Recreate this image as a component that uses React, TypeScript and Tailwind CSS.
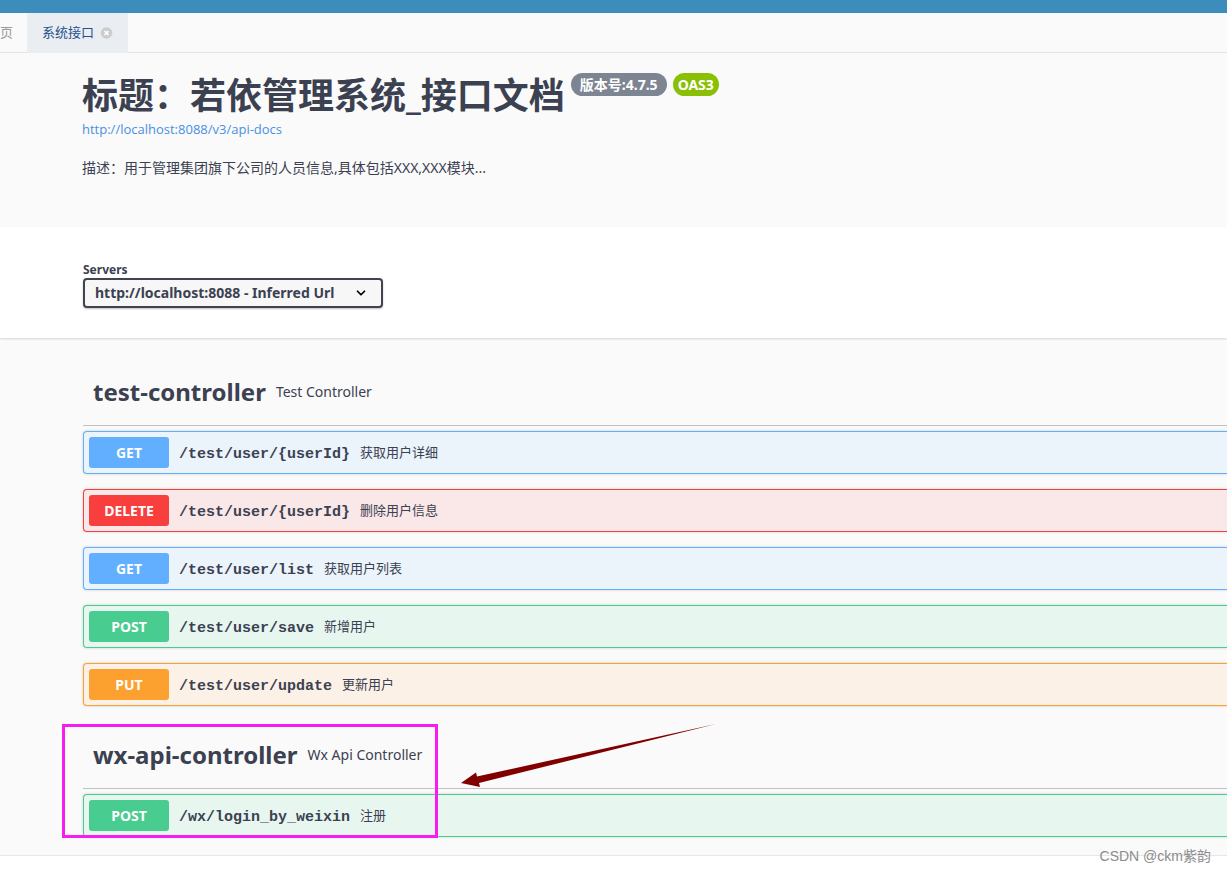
import { useState } from "react";
import clsx from "clsx";
import { ChevronDown } from "lucide-react";

type Method = "GET" | "DELETE" | "POST" | "PUT";

type Operation = {
  method: Method;
  path: string;
  summary: string;
};

const rowStyles: Record<Method, string> = {
  GET: "border-[#61affe] bg-[#ebf3fb]",
  DELETE: "border-[#f93e3e] bg-[#fae7e7]",
  POST: "border-[#49cc90] bg-[#e8f6f0]",
  PUT: "border-[#fca130] bg-[#fbf1e6]",
};

const methodStyles: Record<Method, string> = {
  GET: "bg-[#61affe]",
  DELETE: "bg-[#f93e3e]",
  POST: "bg-[#49cc90]",
  PUT: "bg-[#fca130]",
};

const testOperations: Operation[] = [
  { method: "GET", path: "/test/user/{userId}", summary: "获取用户详细" },
  { method: "DELETE", path: "/test/user/{userId}", summary: "删除用户信息" },
  { method: "GET", path: "/test/user/list", summary: "获取用户列表" },
  { method: "POST", path: "/test/user/save", summary: "新增用户" },
  { method: "PUT", path: "/test/user/update", summary: "更新用户" },
];

const wxOperations: Operation[] = [
  { method: "POST", path: "/wx/login_by_weixin", summary: "注册" },
];

function OperationRow({ method, path, summary }: Operation) {
  return (
    <button
      type="button"
      className={clsx(
        "flex h-[43px] w-full items-center rounded-l border border-r-0 px-[5px] text-left shadow-[0_0_3px_rgba(0,0,0,0.19)]",
        rowStyles[method]
      )}
    >
      <span
        className={clsx(
          "h-[31px] min-w-20 rounded-[3px] px-[15px] text-center text-sm leading-[31px] font-bold text-white",
          methodStyles[method]
        )}
      >
        {method}
      </span>
      <span className="px-[10px] pt-1 font-['Liberation_Mono',monospace] text-[15px] leading-5 font-bold">{path}</span>
      <span className="pb-[2px] text-[13px] leading-5">{summary}</span>
    </button>
  );
}

function TagSection({ name, description, operations }: { name: string; description: string; operations: Operation[] }) {
  return (
    <section>
      <h3 className="mb-[5px] flex h-[68px] items-center gap-[10px] border-b border-[#3b4151]/30 pl-[10px]">
        <span className="text-2xl leading-8 font-bold">{name}</span>
        <small className="text-sm leading-5 font-normal">{description}</small>
      </h3>
      <div className="flex flex-col gap-[15px]">
        {operations.map((op) => (
          <OperationRow key={op.method + op.path} {...op} />
        ))}
      </div>
    </section>
  );
}

export default function App() {
  const [server, setServer] = useState("http://localhost:8088");

  return (
    <div className="relative min-h-screen overflow-x-hidden bg-white font-['Noto_Sans','Noto_Sans_CJK_SC',sans-serif] text-[#3b4151]">
      <div className="h-[13px] bg-[#3c8dbc]" />

      <nav className="flex h-10 border-b border-[#e4e4e4] bg-[#fafafa] text-[13px]">
        <a href="#home" aria-label="首页" className="flex w-[27px] items-center text-[#999]">
          页
        </a>
        <div className="flex h-10 items-center gap-[6px] bg-[#eaedf1] px-[15px] text-[#23508e]">
          <a href="#api">系统接口</a>
          <button type="button" aria-label="关闭">
            <svg viewBox="0 0 12 12" className="h-3 w-[13px]">
              <circle cx="6" cy="6" r="5.8" fill="#ccc" />
              <path d="M4 4l4 4M8 4l-4 4" stroke="#fff" strokeWidth="1.7" />
            </svg>
          </button>
        </div>
      </nav>

      <header className="bg-[#fafafa] pt-[18px] pb-[49px] pl-[82px]">
        <div className="flex items-start gap-[6px]">
          <h2 className="text-4xl leading-[50px] font-bold">标题：若依管理系统_接口文档</h2>
          <span className="mt-[2px] h-[23px] rounded-full bg-[#7d8492] px-[9px] text-sm leading-[23px] font-bold text-white">
            版本号:4.7.5
          </span>
          <span className="mt-[2px] h-[23px] rounded-full bg-[#89bf04] px-[5px] text-sm leading-[23px] font-bold text-white">
            OAS3
          </span>
        </div>
        <a href="#api-docs" className="block font-['Open_Sans',sans-serif] text-[13px] leading-4 text-[#4990e2]">
          http://localhost:8088/v3/api-docs
        </a>
        <p className="mt-[21px] text-sm leading-5">描述：用于管理集团旗下公司的人员信息,具体包括XXX,XXX模块...</p>
      </header>

      <div className="relative bg-white pt-[34px] pb-[30px] pl-[83px] shadow-[0_1px_2px_rgba(0,0,0,0.15)]">
        <label htmlFor="servers" className="block text-xs leading-[17px] font-bold">
          Servers
        </label>
        <div className="relative w-[300px]">
          <select
            id="servers"
            value={server}
            onChange={(e) => setServer(e.target.value)}
            className="block h-[30px] w-full appearance-none rounded border-2 border-[#41444e] bg-[#f7f7f7] pl-[10px] text-sm font-bold shadow-[0_1px_2px_rgba(0,0,0,0.25)]"
          >
            <option value="http://localhost:8088">http://localhost:8088 - Inferred Url</option>
          </select>
          <ChevronDown size={14} strokeWidth={3} className="pointer-events-none absolute top-2 right-[15px] text-black" />
        </div>
      </div>

      <main className="border-b border-[#e7e7e7] bg-[#fafafa] pt-5 pb-[18px] pl-[83px]">
        <TagSection name="test-controller" description="Test Controller" operations={testOperations} />
        <div className="relative mt-[15px]">
          <TagSection name="wx-api-controller" description="Wx Api Controller" operations={wxOperations} />
          {/* callout around the new controller */}
          <div className="pointer-events-none absolute top-[3px] -left-[21px] h-[114px] w-[376px] border-3 border-[#f81cf0]" />
          <svg viewBox="0 0 256 64" className="pointer-events-none absolute top-[3px] left-[378px] h-16 w-64">
            <path d="M0 59L15 48.500L16 52.500L255 0L18 59L19 63Z" fill="#800000" />
          </svg>
        </div>
      </main>

      <div className="absolute right-4 bottom-[7px] font-['Liberation_Sans','Noto_Sans_CJK_SC',sans-serif] text-sm leading-5 text-[#8c8c8c]">
        CSDN @ckm紫韵
      </div>
    </div>
  );
}
